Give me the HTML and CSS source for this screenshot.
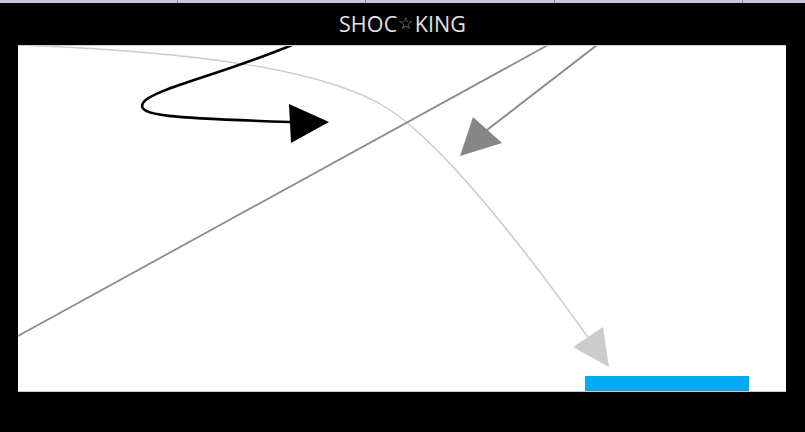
FILE: index.html
```html
<!DOCTYPE html>
<html lang="en">
<head>
  <meta charset="UTF-8" />
  <meta name="viewport" content="width=device-width, initial-scale=1.0"/>
  <title>SHOC☆KING</title>
  <link rel="stylesheet" href="styles.css">
</head>
<body>

<div class="tabs">
  <div class="tab"></div>
  <div class="tab"></div>
  <div class="tab"></div>
  <div class="tab"></div>
  <div class="tab last"></div>
</div>

<header class="title">SHOC<span class="star">☆</span>KING</header>

<div class="stage">
  <svg class="canvas" viewBox="18 45 768 347" width="768" height="347">
    <!-- light curved arrow -->
    <path d="M18,45 C200,52 330,70 390,110 C450,150 540,270 590,340" fill="none" stroke="#cccccc" stroke-width="1.5"/>
    <polygon points="573,347 603,327 609,367" fill="#cccccc"/>

    <!-- long straight line -->
    <line x1="18" y1="336" x2="548" y2="45" stroke="#8c8c8c" stroke-width="1.8"/>

    <!-- grey arrow -->
    <line x1="597" y1="45" x2="487" y2="130" stroke="#8c8c8c" stroke-width="2"/>
    <polygon points="473,117 502,143 460,156" fill="#868686"/>

    <!-- black arrow -->
    <path d="M292,45 C220,75 150,90 143,103 C136,116 170,118 290,122" fill="none" stroke="#000" stroke-width="2.6"/>
    <polygon points="289,104 329,122 291,143" fill="#000"/>

    <rect x="585" y="376" width="164" height="16" fill="#00a9f4"/>
  </svg>
</div>

</body>
</html>
```

FILE: styles.css
```css
* {
  box-sizing: border-box;
}
body {
  margin: 0;
  background: #000;
  font-family: 'Open Sans', 'DejaVu Sans', sans-serif;
  height: 432px;
  overflow: hidden;
}

.tabs {
  display: flex;
  height: 3px;
  background: #c3ccdb;
  overflow: hidden;
}

.tab {
  flex: none;
  width: 188px;
  border-left: 1px solid #7d8593;
}

.tab:first-child {
  width: 177px;
  border-left: none;
}

.tab:nth-child(3) {
  width: 189px;
}

.tab.last {
  flex: 1;
  width: auto;
  min-width: 0;
}

.title {
  height: 42px;
  display: flex;
  justify-content: center;
  align-items: center;
  color: #e2e2e2;
  font-size: 21.5px;
  letter-spacing: 0.1px;
  padding-bottom: 2px;
}

.title .star {
  color: #9a9a9a;
  font-family: 'DejaVu Sans', sans-serif;
  font-size: 17px;
  margin: 0 1px;
}

.stage {
  margin: 0 19px 0 18px;
  height: 347px;
  background: #fff;
  border-top: 1px solid #d0d0d0;
  border-bottom: 1px solid #c8c8c8;
  position: relative;
  overflow: hidden;
}

.canvas {
  position: absolute;
  top: -1px;
  left: 0;
  display: block;
}
```
